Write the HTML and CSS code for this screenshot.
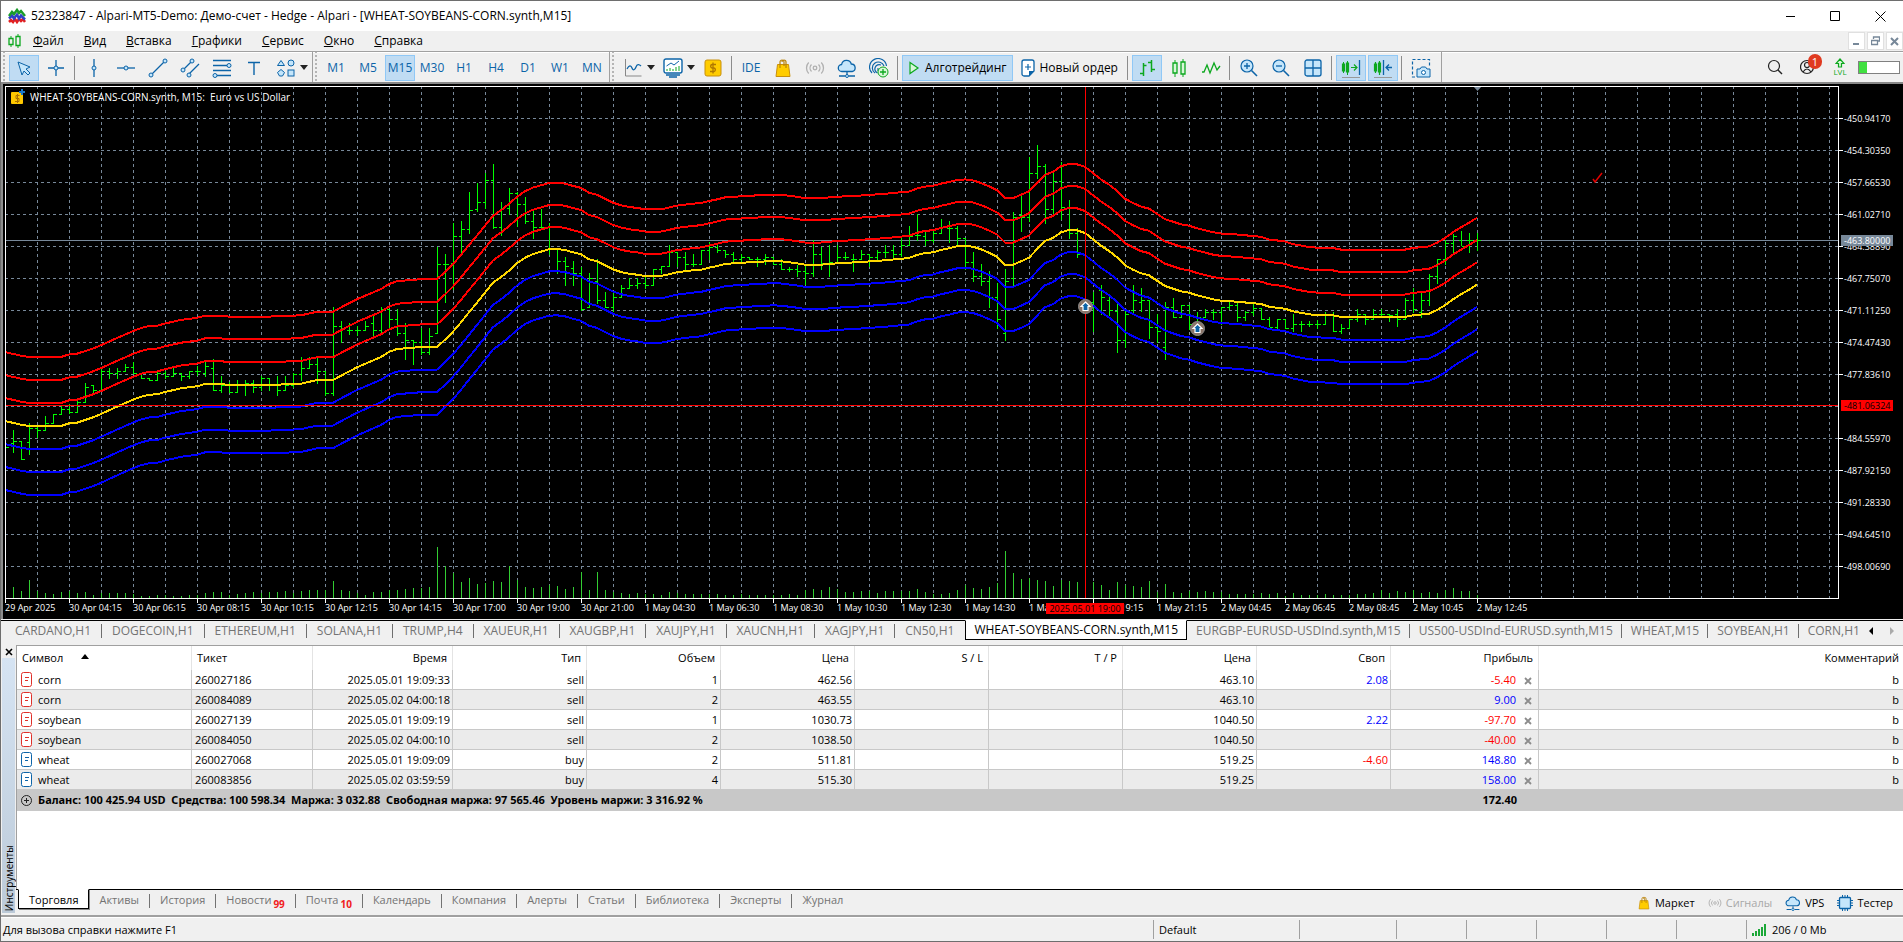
FILE: index.html
```html
<!DOCTYPE html>
<html lang="ru">
<head>
<meta charset="utf-8">
<title>52323847 - Alpari-MT5-Demo</title>
<link rel="stylesheet" href="styles.css">
</head>
<body>
<svg class="defs" aria-hidden="true">
  <symbol id="i-cloud" viewBox="0 0 20 20"><path d="M5 13.5a3.5 3.5 0 0 1-.4-7A5 5 0 0 1 14.3 6a3.8 3.8 0 0 1 .9 7.500z" fill="#c5e6fb" stroke="#0c64a8" stroke-width="1.300"/><path d="M10 14v3M2 18h6M12 18h6" stroke="#0c64a8" stroke-width="1.300"/><circle cx="10" cy="18" r="1.500" fill="#c5e6fb" stroke="#0c64a8"/></symbol>
  <symbol id="i-bag" viewBox="0 0 20 20"><path d="M4.500 6.500h11l1.500 12h-14z" fill="#ffcc00" stroke="#c8900c"/><path d="M7 10V4a2 2 0 0 1 4 0v4M9 4a2 2 0 0 1 4 0v6" fill="none" stroke="#b98208" stroke-width="1.200"/></symbol>
  <symbol id="i-signal" viewBox="0 0 20 20"><g fill="none" stroke="#b0b0b0" stroke-width="1.300"><circle cx="10" cy="10" r="1.800"/><path d="M6.500 6.500a5 5 0 0 0 0 7M13.500 6.500a5 5 0 0 1 0 7M3.700 4.500a8 8 0 0 0 0 11M16.300 4.500a8 8 0 0 1 0 11"/></g></symbol>
  <symbol id="i-sell" viewBox="0 0 11 15"><rect x=".5" y=".5" width="10" height="14" rx="2" fill="#fff" stroke="#e0302a"/><path d="M4 5.500h4M4 8.500h3" stroke="#e0302a"/></symbol>
  <symbol id="i-buy" viewBox="0 0 11 15"><rect x=".5" y=".5" width="10" height="14" rx="2" fill="#fff" stroke="#0c64a8"/><path d="M4 5.500h4M4 8.500h3" stroke="#0c64a8"/></symbol>
  <symbol id="i-x" viewBox="0 0 8 8"><path d="M1 1l6 6M7 1L1 7" stroke="#8c8c8c" stroke-width="1.800"/></symbol>
</svg>

<header class="titlebar">
  <svg class="app-icon" width="18" height="16" viewBox="0 0 18 16"><g fill="none" stroke-width="2.500"><path d="M1 14l2-2 2 2 2-3 2 3 2-3 2 2 2-2 2 3" stroke="#e32020"/><path d="M1 10.500l3-3 2 3 3-4 2 4 2-3 4 4" stroke="#3040c8"/><path d="M1 8l3-4 2 2 3-4 2 3 2-2 4 5" stroke="#1a9c2a"/></g></svg>
  <h1 class="title">52323847 - Alpari-MT5-Demo: Демо-счет - Hedge - Alpari - [WHEAT-SOYBEANS-CORN.synth,M15]</h1>
  <div class="win-controls">
    <button aria-label="Свернуть"><svg width="11" height="11"><path d="M1 5.500h9" stroke="#000"/></svg></button>
    <button aria-label="Развернуть"><svg width="11" height="11"><path d="M.5 .5h9v9h-9z" fill="none" stroke="#000"/></svg></button>
    <button aria-label="Закрыть"><svg width="11" height="11"><path d="M.5 .5l10 10M10.500 .5l-10 10" stroke="#000"/></svg></button>
  </div>
</header>

<nav class="menubar">
  <svg width="13" height="15" viewBox="0 0 13 15"><path d="M3 2v11M10 0v14" stroke="#0ca81e" stroke-width="1"/><path d="M1 4.500h4v6H1zM8 2.500h4v9H8z" fill="#f0f0f0" stroke="#0ca81e" stroke-width="1.300"/></svg>
  <a href="#"><u>Ф</u>айл</a><a href="#"><u>В</u>ид</a><a href="#"><u>В</u>ставка</a><a href="#"><u>Г</u>рафики</a><a href="#"><u>С</u>ервис</a><a href="#"><u>О</u>кно</a><a href="#"><u>С</u>правка</a>
  <div class="mdi">
    <button aria-label="Свернуть график"><svg width="9" height="10"><path d="M1 8h6" stroke="#778899" stroke-width="2"/></svg></button>
    <button aria-label="Восстановить график"><svg width="9" height="10"><path d="M2.500 3V1h6v4h-2M.5 4.500h6v4h-6z" fill="none" stroke="#778899" stroke-width="1.300"/></svg></button>
    <button aria-label="Закрыть график"><svg width="9" height="10"><path d="M1 2l7 7M8 2L1 9" stroke="#778899" stroke-width="2"/></svg></button>
  </div>
</nav>

<div class="toolbar">
  <section class="group draw">
    <button class="tool on" aria-label="Курсор"><svg width="20" height="20" viewBox="0 0 20 20"><path d="M4 4l12 5-4 2 4 4-2 2-4-4-2 4z" fill="#c5e6fb" stroke="#0c64a8"/></svg></button>
    <button class="tool" aria-label="Перекрестие"><svg width="20" height="20" viewBox="0 0 20 20"><path d="M10 2v16M2 10h16" stroke="#0c64a8" stroke-width="1.300"/><circle cx="10" cy="10" r="2" fill="#c5e6fb" stroke="#0c64a8"/></svg></button>
    <i class="sep"></i>
    <button class="tool" aria-label="Вертикальная линия"><svg width="20" height="20" viewBox="0 0 20 20"><path d="M10 1v18" stroke="#0c64a8" stroke-width="1.300"/><circle cx="10" cy="10" r="2" fill="#c5e6fb" stroke="#0c64a8"/></svg></button>
    <button class="tool" aria-label="Горизонтальная линия"><svg width="20" height="20" viewBox="0 0 20 20"><path d="M1 10h18" stroke="#0c64a8" stroke-width="1.300"/><circle cx="10" cy="10" r="2" fill="#c5e6fb" stroke="#0c64a8"/></svg></button>
    <button class="tool" aria-label="Трендовая линия"><svg width="20" height="20" viewBox="0 0 20 20"><path d="M3 17L17 3" stroke="#0c64a8" stroke-width="1.300"/><circle cx="3" cy="17" r="2" fill="#c5e6fb" stroke="#0c64a8"/><circle cx="17" cy="3" r="2" fill="#c5e6fb" stroke="#0c64a8"/></svg></button>
    <button class="tool" aria-label="Канал"><svg width="20" height="20" viewBox="0 0 20 20"><path d="M3 12L12 3M8 17L19 6" stroke="#0c64a8" stroke-width="1.300"/><g fill="#c5e6fb" stroke="#0c64a8"><circle cx="3" cy="12" r="2"/><circle cx="12" cy="3" r="2"/><circle cx="9" cy="17" r="2"/></g></svg></button>
    <button class="tool" aria-label="Фибоначчи"><svg width="20" height="20" viewBox="0 0 20 20"><path d="M1 2.500h18M1 7.500h18M1 12.500h18M1 17.500h18" stroke="#0c64a8" stroke-width="1.300"/><g fill="#c5e6fb" stroke="#0c64a8"><circle cx="17" cy="7.500" r="2"/><circle cx="3" cy="17.500" r="2"/></g></svg></button>
    <button class="tool" aria-label="Текст"><svg width="20" height="20" viewBox="0 0 20 20"><path d="M4 4.500h12M10 4v13" stroke="#0c64a8" stroke-width="1.400"/></svg></button>
    <button class="tool" aria-label="Фигуры"><svg width="20" height="20" viewBox="0 0 20 20"><g fill="#c5e6fb" stroke="#0c64a8"><path d="M5 2.500l3.500 5h-7z"/><circle cx="15" cy="5" r="3"/><path d="M5 11.500l3.500 3-2 3.500h-3l-2-3.500z"/><rect x="12" y="12" width="6" height="6"/></g></svg></button>
    <i class="caret"></i>
  </section>
  <section class="group frames">
    <button class="tool">M1</button><button class="tool">M5</button><button class="tool on">M15</button><button class="tool">M30</button><button class="tool">H1</button><button class="tool">H4</button><button class="tool">D1</button><button class="tool">W1</button><button class="tool">MN</button>
  </section>
  <section class="group">
    <button class="tool" aria-label="Тип графика"><svg width="20" height="20" viewBox="0 0 20 20"><path d="M2.500 1v17h16" fill="none" stroke="#888"/><path d="M4 11c2-4 4-4 5-1s3 2 4-1 3-3 5-1" fill="none" stroke="#0c64a8" stroke-width="1.300"/></svg></button><i class="caret"></i>
    <button class="tool" aria-label="Индикаторы"><svg width="20" height="20" viewBox="0 0 20 20"><rect x="1" y="1" width="18" height="14" rx="2" fill="#fff" stroke="#0c64a8" stroke-width="1.400"/><path d="M3.500 8L8 5l3 2 5-4" fill="none" stroke="#0c64a8"/><path d="M4 13v-2M7 13v-3M10 13v-2M13 13V9M16 13V8" stroke="#0ca81e"/><path d="M3 17h14M6 19h8" stroke="#0c64a8" stroke-width="1.300"/></svg></button><i class="caret"></i>
    <button class="tool" aria-label="Символ"><svg width="20" height="20" viewBox="0 0 20 20"><rect x="2" y="2" width="16" height="16" rx="2" fill="#ffcc00" stroke="#c8900c"/><path d="M13 6.500H9a1.800 1.800 0 0 0 0 3.500h2a1.800 1.800 0 0 1 0 3.500H7M10 4.500v11" fill="none" stroke="#b07800" stroke-width="1.300"/></svg></button>
    <i class="sep"></i>
    <button class="tool">IDE</button>
    <button class="tool" aria-label="Маркет"><svg width="20" height="20"><use href="#i-bag"/></svg></button>
    <button class="tool" aria-label="Сигналы"><svg width="20" height="20"><use href="#i-signal"/></svg></button>
    <button class="tool" aria-label="VPS"><svg width="20" height="20"><use href="#i-cloud"/></svg></button>
    <button class="tool" aria-label="Торговые счета"><svg width="20" height="20" viewBox="0 0 20 20"><g fill="none" stroke="#0c64a8" stroke-width="1.200"><path d="M3 15A8.500 8.500 0 1 1 17.500 8M6 15A6 6 0 1 1 15 8M8.500 15A3.500 3.500 0 1 1 12 7M9 10v3"/></g><circle cx="14" cy="14" r="5" fill="#d9f7d9" stroke="#0ca81e"/><path d="M14 11v6M11 14h6" stroke="#0ca81e" stroke-width="1.300"/></svg></button>
    <i class="sep"></i>
    <button class="tool wide on"><svg width="12" height="14" viewBox="0 0 12 14"><path d="M2 1.500l8 5.500-8 5.500z" fill="#d9f7d9" stroke="#0ca81e" stroke-width="1.200"/></svg>Алготрейдинг</button>
    <button class="tool wide"><svg width="14" height="18" viewBox="0 0 14 18"><path d="M1 3a2 2 0 0 1 2-2h8a2 2 0 0 1 2 2v9l-5 5H3a2 2 0 0 1-2-2z" fill="#fff" stroke="#0c64a8" stroke-width="1.300"/><path d="M13 12l-5 5v-5z" fill="#0c64a8"/><path d="M7 5v6M4 8h6" stroke="#0c64a8" stroke-width="1.200"/></svg>Новый ордер</button>
    <i class="sep"></i>
    <button class="tool on" aria-label="Бары"><svg width="20" height="20" viewBox="0 0 20 20"><path d="M6.500 5v13M6.500 7.500h3M3 15.500h3.500M14.500 2v12M11 4.500h3.500M14.500 11.500H18" stroke="#0ca81e" stroke-width="1.500"/></svg></button>
    <button class="tool" aria-label="Свечи"><svg width="20" height="20" viewBox="0 0 20 20"><path d="M6 2v17M14 1v18" stroke="#0ca81e"/><path d="M4 5h4v10H4zM12 4h4v12h-4z" fill="#d9f7d9" stroke="#0ca81e" stroke-width="1.300"/></svg></button>
    <button class="tool" aria-label="Линия"><svg width="20" height="20" viewBox="0 0 20 20"><path d="M1 14h2l3-7 3 8 4-10 3 7 3-4" fill="none" stroke="#0ca81e" stroke-width="1.300"/></svg></button>
    <i class="sep"></i>
    <button class="tool" aria-label="Увеличить"><svg width="20" height="20" viewBox="0 0 20 20"><path d="M12.500 12.500L18 18" stroke="#0c64a8" stroke-width="1.600"/><circle cx="8" cy="8" r="6" fill="#c5e6fb" stroke="#0c64a8" stroke-width="1.200"/><path d="M5 8h6M8 5v6" stroke="#0c64a8" stroke-width="1.300"/></svg></button>
    <button class="tool" aria-label="Уменьшить"><svg width="20" height="20" viewBox="0 0 20 20"><path d="M12.500 12.500L18 18" stroke="#0c64a8" stroke-width="1.600"/><circle cx="8" cy="8" r="6" fill="#c5e6fb" stroke="#0c64a8" stroke-width="1.200"/><path d="M5 8h6" stroke="#0c64a8" stroke-width="1.300"/></svg></button>
    <button class="tool" aria-label="Плитка"><svg width="20" height="20" viewBox="0 0 20 20"><rect x="2" y="2" width="16" height="16" rx="2" fill="#c5e6fb" stroke="#0c64a8" stroke-width="1.300"/><path d="M10 2v16M2 10h16" stroke="#0c64a8" stroke-width="1.300"/></svg></button>
    <i class="sep"></i>
    <button class="tool on" aria-label="Автопрокрутка"><svg width="20" height="20" viewBox="0 0 20 20"><path d="M2.500 4v11M6.500 3v14" stroke="#0ca81e"/><path d="M1.500 6h2v7h-2zM5.500 5h2v9h-2zM10 9.500h6M13 6.500l3 3-3 3" fill="none" stroke="#0ca81e" stroke-width="1.200"/><path d="M18.500 2v15" stroke="#0c64a8" stroke-width="1.300"/><path d="M1 19.500h18" stroke="#999"/></svg></button>
    <button class="tool on" aria-label="Сдвиг графика"><svg width="20" height="20" viewBox="0 0 20 20"><path d="M1.500 6h2v7h-2zM5.500 5h2v9h-2zM2.500 4v11M6.500 3v14" fill="none" stroke="#0ca81e" stroke-width="1.200"/><path d="M10.500 2v15M13 9.500h6M16 6.500l-3 3 3 3" fill="none" stroke="#0c64a8" stroke-width="1.300"/><path d="M1 19.500h18" stroke="#999"/></svg></button>
    <i class="sep"></i>
    <button class="tool" aria-label="Снимок"><svg width="20" height="20" viewBox="0 0 20 20"><path d="M4 19H1.500V1.500h17V8" fill="none" stroke="#0c64a8" stroke-width="1.200" stroke-dasharray="3 2"/><path d="M6 11h3l1.500-2h4L16 11h3v8H6z" fill="#c5e6fb" stroke="#0c64a8"/><circle cx="12.500" cy="14.500" r="2" fill="#fff" stroke="#0c64a8"/></svg></button>
  </section>
  <div class="tray">
    <button class="tool" aria-label="Поиск"><svg width="18" height="18" viewBox="0 0 18 18"><circle cx="8" cy="8" r="5.500" fill="none" stroke="#222" stroke-width="1.200"/><path d="M12 12l4 4" stroke="#222" stroke-width="1.500"/></svg></button>
    <button class="tool user" aria-label="Профиль"><svg width="18" height="18" viewBox="0 0 18 18"><g fill="none" stroke="#222" stroke-width="1.200"><circle cx="7" cy="9" r="6.500"/><circle cx="7" cy="7" r="2.500"/><path d="M3 14q4-6 8 0"/></g></svg><b class="badge">1</b></button>
    <span class="lvl"><svg width="10" height="10" viewBox="0 0 10 10"><path d="M3.500 9V5.500H1L5 1l4 4.500H6.500V9z" fill="#d9f7d9" stroke="#0ca81e" stroke-width="1.200"/></svg>LVL</span>
    <span class="battery"><i></i></span>
  </div>
</div>

<main class="chart">
  <div class="plot-col">
    <div class="plot">
      <svg id="plot" width="100%" height="513" role="img" aria-label="График WHEAT-SOYBEANS-CORN.synth, M15"></svg>
      <p class="caption"><svg width="14" height="16" viewBox="0 0 14 16"><rect x="0" y="3" width="12" height="12" rx="1" fill="#ffc800"/><path d="M8.500 6.500H5v3h3v3H4M6.500 5v9" fill="none" stroke="#a87000"/><path d="M11 0v6M8 3h6" stroke="#1c78c8" stroke-width="2"/></svg>WHEAT-SOYBEANS-CORN.synth, M15:&nbsp; Euro vs US Dollar</p>
    </div>
    <div class="times">
      <span>29 Apr 2025</span><span>30 Apr 04:15</span><span>30 Apr 06:15</span><span>30 Apr 08:15</span><span>30 Apr 10:15</span><span>30 Apr 12:15</span><span>30 Apr 14:15</span><span>30 Apr 17:00</span><span>30 Apr 19:00</span><span>30 Apr 21:00</span><span>1 May 04:30</span><span>1 May 06:30</span><span>1 May 08:30</span><span>1 May 10:30</span><span>1 May 12:30</span><span>1 May 14:30</span><span>1 May 16:30</span><span>1 May 19:15</span><span>1 May 21:15</span><span>2 May 04:45</span><span>2 May 06:45</span><span>2 May 08:45</span><span>2 May 10:45</span><span>2 May 12:45</span>
      <b class="cursor-time">2025.05.01 19:00</b>
    </div>
  </div>
  <div class="prices">
    <span>-450.94170</span><span>-454.30350</span><span>-457.66530</span><span>-461.02710</span><span>-464.38890</span><span>-467.75070</span><span>-471.11250</span><span>-474.47430</span><span>-477.83610</span><span class="blank"></span><span>-484.55970</span><span>-487.92150</span><span>-491.28330</span><span>-494.64510</span><span>-498.00690</span>
    <b class="tag bid">-463.80000</b><b class="tag level">-481.06324</b>
  </div>
</main>

<nav class="chart-tabs">
  <a href="#">CARDANO,H1</a><a href="#">DOGECOIN,H1</a><a href="#">ETHEREUM,H1</a><a href="#">SOLANA,H1</a><a href="#">TRUMP,H4</a><a href="#">XAUEUR,H1</a><a href="#">XAUGBP,H1</a><a href="#">XAUJPY,H1</a><a href="#">XAUCNH,H1</a><a href="#">XAGJPY,H1</a><a href="#" class="before">CN50,H1</a><a href="#" class="active">WHEAT-SOYBEANS-CORN.synth,M15</a><a href="#">EURGBP-EURUSD-USDInd.synth,M15</a><a href="#">US500-USDInd-EURUSD.synth,M15</a><a href="#">WHEAT,M15</a><a href="#">SOYBEAN,H1</a><a href="#" class="before">CORN,H1</a>
  <div class="scrollers"><button aria-label="Назад"><svg width="5" height="8"><path d="M4 0v8L0 4z"/></svg></button><button aria-label="Вперёд"><svg width="5" height="8"><path d="M1 0v8l4-4z" fill="#aaa"/></svg></button></div>
</nav>

<section class="toolbox">
  <aside class="strip"><button class="close" aria-label="Закрыть панель"><svg width="8" height="8" viewBox="0 0 8 8"><path d="M1 1l6 6M7 1L1 7" stroke="#000" stroke-width="1.600"/></svg></button><span class="strip-title">Инструменты</span></aside>
  <div class="panel">
    <div class="table-area">
    <table class="trades">
      <colgroup><col class="c-sym"><col class="c-tick"><col class="c-time"><col class="c-n"><col class="c-n"><col class="c-n"><col class="c-n"><col class="c-n"><col class="c-n"><col class="c-n"><col class="c-profit"><col></colgroup>
      <thead><tr><th class="l">Символ<svg class="sort" width="8" height="5"><path d="M0 5l4-5 4 5z"/></svg></th><th class="l">Тикет</th><th>Время</th><th>Тип</th><th>Объем</th><th>Цена</th><th>S / L</th><th>T / P</th><th>Цена</th><th>Своп</th><th>Прибыль</th><th>Комментарий</th></tr></thead>
      <tbody>
        <tr><td class="sym"><svg width="11" height="15"><use href="#i-sell"/></svg>corn</td><td class="l">260027186</td><td>2025.05.01 19:09:33</td><td>sell</td><td>1</td><td>462.56</td><td></td><td></td><td>463.10</td><td class="pos">2.08</td><td class="neg">-5.40<button class="x" aria-label="Закрыть позицию"><svg width="8" height="8"><use href="#i-x"/></svg></button></td><td>b</td></tr>
        <tr><td class="sym"><svg width="11" height="15"><use href="#i-sell"/></svg>corn</td><td class="l">260084089</td><td>2025.05.02 04:00:18</td><td>sell</td><td>2</td><td>463.55</td><td></td><td></td><td>463.10</td><td></td><td class="pos">9.00<button class="x" aria-label="Закрыть позицию"><svg width="8" height="8"><use href="#i-x"/></svg></button></td><td>b</td></tr>
        <tr><td class="sym"><svg width="11" height="15"><use href="#i-sell"/></svg>soybean</td><td class="l">260027139</td><td>2025.05.01 19:09:19</td><td>sell</td><td>1</td><td>1030.73</td><td></td><td></td><td>1040.50</td><td class="pos">2.22</td><td class="neg">-97.70<button class="x" aria-label="Закрыть позицию"><svg width="8" height="8"><use href="#i-x"/></svg></button></td><td>b</td></tr>
        <tr><td class="sym"><svg width="11" height="15"><use href="#i-sell"/></svg>soybean</td><td class="l">260084050</td><td>2025.05.02 04:00:10</td><td>sell</td><td>2</td><td>1038.50</td><td></td><td></td><td>1040.50</td><td></td><td class="neg">-40.00<button class="x" aria-label="Закрыть позицию"><svg width="8" height="8"><use href="#i-x"/></svg></button></td><td>b</td></tr>
        <tr><td class="sym"><svg width="11" height="15"><use href="#i-buy"/></svg>wheat</td><td class="l">260027068</td><td>2025.05.01 19:09:09</td><td>buy</td><td>2</td><td>511.81</td><td></td><td></td><td>519.25</td><td class="neg">-4.60</td><td class="pos">148.80<button class="x" aria-label="Закрыть позицию"><svg width="8" height="8"><use href="#i-x"/></svg></button></td><td>b</td></tr>
        <tr><td class="sym"><svg width="11" height="15"><use href="#i-buy"/></svg>wheat</td><td class="l">260083856</td><td>2025.05.02 03:59:59</td><td>buy</td><td>4</td><td>515.30</td><td></td><td></td><td>519.25</td><td></td><td class="pos">158.00<button class="x" aria-label="Закрыть позицию"><svg width="8" height="8"><use href="#i-x"/></svg></button></td><td>b</td></tr>
      </tbody>
      <tfoot><tr><td class="sym" colspan="10"><svg width="11" height="11" viewBox="0 0 11 11"><circle cx="5.500" cy="5.500" r="5" fill="none" stroke="#222"/><path d="M3 5.500h5M5.500 3v5" stroke="#222"/></svg>Баланс: 100 425.94 USD&nbsp; Средства: 100 598.34&nbsp; Маржа: 3 032.88&nbsp; Свободная маржа: 97 565.46&nbsp; Уровень маржи: 3 316.92 %</td><td class="total">172.40</td><td></td></tr></tfoot>
    </table>
    </div>
    <nav class="panel-tabs">
      <a href="#" class="active">Торговля</a><a href="#">Активы</a><a href="#">История</a><a href="#">Новости<sub>99</sub></a><a href="#">Почта<sub>10</sub></a><a href="#">Календарь</a><a href="#">Компания</a><a href="#">Алерты</a><a href="#">Статьи</a><a href="#">Библиотека</a><a href="#">Эксперты</a><a href="#">Журнал</a>
      <div class="services">
        <button><svg width="14" height="14"><use href="#i-bag"/></svg>Маркет</button><button class="off"><svg width="14" height="14"><use href="#i-signal"/></svg>Сигналы</button><button><svg width="16" height="16"><use href="#i-cloud"/></svg>VPS</button><button><svg width="16" height="16" viewBox="0 0 16 16"><path d="M5.500 0v16M8 0v16M10.500 0v16M0 5.500h16M0 8h16M0 10.500h16" stroke="#0c64a8"/><rect x="2.500" y="2.500" width="11" height="11" rx="1" fill="#c5e6fb" stroke="#0c64a8" stroke-width="1.300"/></svg>Тестер</button>
      </div>
    </nav>
  </div>
</section>

<footer class="status">
  <span class="hint">Для вызова справки нажмите F1</span><span class="s1">Default</span><span class="s2"></span><span class="s3"></span><span class="s3"></span><span class="s3"></span><span class="s3"></span><span class="s3"></span><span class="net"><svg width="14" height="12" viewBox="0 0 14 12"><path d="M1 12V9M4 12V7M7 12V5M10 12V3M13 12V0" stroke="#1ca838" stroke-width="2"/></svg>206 / 0 Mb</span>
</footer>
<script src="chart.js"></script>
</body>
</html>
```
FILE: styles.css
```css
* { box-sizing: border-box; }
body {
  margin: 0;
  min-height: 100vh;
  display: flex;
  flex-direction: column;
  background: #f0f0f0;
  border: 1px solid #6e6e6e;
  border-right: 0;
  font: 11px/16px "Open Sans", "Noto Sans", sans-serif;
  color: #000;
  overflow-x: hidden;
}
a { color: inherit; text-decoration: none; }
button { font: inherit; color: inherit; border: 0; padding: 0; background: none; }
svg { flex: none; display: block; }
.defs { position: absolute; width: 0; height: 0; }

.titlebar { display: flex; align-items: center; height: 30px; padding-left: 7px; background: #fff; }
.title { margin: 0 auto 0 5px; font-size: 12px; font-weight: 400; white-space: nowrap; }
.win-controls { display: flex; }
.win-controls button { width: 45px; height: 28px; display: grid; place-items: center; }

.menubar { display: flex; align-items: center; height: 20px; padding-left: 7px; font-size: 12px; gap: 20px; }
.menubar > svg { margin-right: -8px; }
.mdi { display: flex; gap: 2px; margin-left: auto; }
.mdi button { width: 17px; height: 18px; background: #fff; border: 1px solid #e0e0e0; display: grid; place-items: center; }

.toolbar { display: flex; height: 33px; border-top: 1px solid #a0a0a0; border-bottom: 2px solid #888; box-shadow: inset 0 1px #fff; }
.group { display: flex; align-items: center; gap: 2px; padding: 1px 5px 0 8px; border-right: 1px solid #a0a0a0; background: radial-gradient(circle, #b4b4b4 1px, transparent 1px) 1px 2px / 4px 4px repeat-y; }
.group.draw { padding-right: 3px; }
.group.frames { padding-right: 2px; }
.tool { width: 30px; height: 26px; display: flex; align-items: center; justify-content: center; gap: 6px; border: 1px solid transparent; color: #0c64a8; font-size: 12px; white-space: nowrap; }
.tool.on { background: #c0dcf3; border-color: #90c8f6; }
.tool.wide { width: auto; padding: 0 5px; color: #000; gap: 5px; }
.sep { width: 1px; height: 24px; margin: 0 2px 0 1px; background: #8c8c8c; }
.caret { border: 4px solid transparent; border-top: 5px solid #222; border-bottom: 0; margin: 0 1px 0 -3px; }
.tray { margin-left: auto; display: flex; align-items: center; gap: 4px; padding-right: 3px; }
.user { position: relative; }
.badge { position: absolute; top: -1px; right: 1px; width: 14px; height: 15px; border-radius: 7px; background: #e03a20; color: #fff; font: 11px/15px "Open Sans", sans-serif; text-align: center; }
.lvl { display: flex; flex-direction: column; align-items: center; width: 24px; color: #0ca81e; font-size: 8px; line-height: 8px; }
.battery { width: 42px; height: 13px; border: 1px solid #808080; background: #fff; margin-left: 2px; }
.battery i { display: block; width: 8px; height: 100%; background: #40e040; }

.chart { display: flex; background: #000; border-left: 2px solid #8c8c8c; color: #fff; padding: 2px 0 0 2px; font-size: 9px; line-height: 11px; }
.plot-col { flex: 1; min-width: 0; }
.plot { position: relative; }
.caption { position: absolute; left: 6px; top: 3px; margin: 0; display: flex; align-items: center; gap: 5px; font-size: 10px; }
.times { position: relative; display: flex; height: 20px; overflow: hidden; }
.times span { flex: 0 0 64px; padding-top: 3px; white-space: nowrap; background: linear-gradient(#fff, #fff) 0 0 / 1px 4px no-repeat; }
.cursor-time { position: absolute; left: 1041px; top: 4px; width: 78px; background: #f00; color: #000; font-weight: 400; text-align: center; white-space: nowrap; }
.prices { position: relative; flex: 0 0 64px; padding-top: 16px; }
.prices span { display: flex; align-items: center; height: 32px; padding-left: 5px; background: linear-gradient(#fff, #fff) 0 16px / 4px 1px no-repeat; }
.prices .blank { background: none; }
.tag { position: absolute; left: 2px; width: 52px; padding-left: 3px; font-weight: 400; }
.bid { top: 149px; background: #778899; }
.level { top: 314px; background: #f00; color: #000; }

.chart-tabs { display: flex; height: 25px; border-top: 1px solid #000; padding: 0 0 5px 4px; margin-top: 1px; color: #737373; font-size: 12px; line-height: 16px; }
.chart-tabs a { position: relative; padding: 2px 11px 0 10px; white-space: nowrap; }
.chart-tabs a:not(.active):not(.before)::after { content: ""; position: absolute; right: 0; top: 3px; height: 14px; border-right: 1px solid #6e6e6e; }
.chart-tabs .active { margin-top: -1px; padding: 1px 8px 0; border: 1px solid #000; border-top-color: #fff; background: #fff; color: #000; }
.chart-tabs .active ~ a { padding: 2px 9px 0; }
.scrollers { margin-left: auto; display: flex; gap: 15px; padding-right: 9px; align-items: center; }

.toolbox { flex: 1; display: flex; border-bottom: 2px solid #a0a0a0; padding-bottom: 2px; }
.strip { width: 15px; display: flex; flex-direction: column; align-items: center; justify-content: space-between; background: linear-gradient(to right, #f0f0f0 1px, transparent 1px, transparent 14px, #f0f0f0 14px), linear-gradient(#f0f0f0 13px, #d6e4f3 13px, #bccad8); }
.close { height: 13px; }
.strip-title { writing-mode: vertical-rl; transform: rotate(180deg); line-height: 14px; font-size: 10px; padding-top: 2px; }
.panel { flex: 1; min-width: 0; display: flex; flex-direction: column; }
.table-area { flex: 1; background: #fff; border: 1px solid #a0a0a0; border-right: 0; border-bottom: 0; }
.trades { width: 100%; table-layout: fixed; border-collapse: separate; border-spacing: 0; }
.c-sym { width: 175px; }
.c-tick { width: 121px; }
.c-time { width: 140px; }
.c-n { width: 134px; }
.c-profit { width: 148px; }
.trades th { height: 24px; padding: 0 5px; font-weight: 400; text-align: right; border-right: 1px solid #e4e4e4; }
.trades td { height: 20px; padding: 0 2px 0 4px; text-align: right; border-right: 1px solid #c8c8c8; border-bottom: 1px solid #c8c8c8; line-height: 16px; white-space: nowrap; }
.trades tr > :last-child { border-right: 0; padding-right: 4px; }
.trades .l { text-align: left; }
.trades td.l { padding-left: 3px; }
.sort { display: inline-block; margin-left: 18px; vertical-align: 3px; }
.trades .sym { text-align: left; }
.sym svg { display: inline-block; vertical-align: middle; margin-right: 6px; margin-top: -2px; }
.trades tbody tr:nth-child(even) { background: #ebebeb; }
.trades .pos { color: #00f; }
.trades .neg { color: #f00; }
.x { margin: 0 4px 0 8px; vertical-align: middle; }
.trades tfoot td { background: #c8c8c8; font-family: "Noto Sans", sans-serif; font-weight: 700; border-color: #c8c8c8; height: 21px; }
.trades tfoot .total { padding-right: 21px; }

.panel-tabs { display: flex; height: 24px; border-top: 1px solid #000; padding-left: 2px; color: #737373; }
.panel-tabs a { position: relative; padding: 1px 11px 0 10px; line-height: 18px; }
.panel-tabs a:not(.active):not(:nth-child(12))::after { content: ""; position: absolute; right: 0; top: 4px; height: 14px; border-right: 1px solid #737373; }
.panel-tabs .active { margin-top: -1px; height: 20px; background: #fff; color: #000; border: 1px solid #000; border-top-color: #fff; padding: 1px 10px 0; box-shadow: 1px 1px #888; }
sub { color: #f02020; font-size: 10px; font-weight: 700; line-height: 8px; margin-left: 2px; vertical-align: -4px; }
.services { margin-left: auto; display: flex; gap: 13px; padding-right: 10px; color: #000; }
.services button { display: flex; align-items: center; gap: 4px; padding-top: 2px; }
.services .off { color: #a8a8a8; }

.status { display: flex; align-items: center; height: 24px; padding: 3px 0 2px 2px; box-shadow: inset 0 1px #fff; }
.status span { height: 19px; line-height: 19px; }
.status .hint { flex: 1; }
.status span + span { border-left: 1px solid #a0a0a0; padding-left: 5px; }
.s1 { width: 146px; }
.s2 { width: 97px; }
.s3 { width: 70px; }
.status .net { width: 157px; display: flex; align-items: center; gap: 6px; }
```
FILE: chart.js
```js
// Values are in thirds of a pixel below the datum line; y() maps them into the plot.
const STEP = 8;
const y = v => v / 3 + 44;

// high, low, open, close for each 15-minute bar
const bars = `945 955 950 952|900 968 938 932|932 990 932 988|880 975 937 895|890 924 895 901|858 903 901 880|853 882 880 853|828 853 853 838|823 853 838 845|813 846 845 816|759 818 816 772|766 788 766 781|717 782 781 724|714 748 724 730|714 747 730 724|702 726 724 710|697 732 710 730|730 746 730 745|745 752 745 751|727 752 751 730|724 747 730 739|715 741 738 730|729 753 730 739|724 747 739 724|708 739 724 724|697 742 730 709|687 783 715 781|738 790 781 766|757 790 766 787|750 788 787 763|750 797 763 760|750 788 760 772|738 783 772 745|743 783 745 766|738 797 765 781|738 783 781 765|730 775 765 731|681 753 731 715|681 715 715 703|681 762 703 724|724 797 724 788|531 797 788 589|573 640 589 598|580 616 600 601|588 617 601 601|573 602 601 589|553 617 580 601|531 608 601 538|537 600 538 566|537 617 566 610|580 690 610 631|630 705 631 637|594 675 637 667|594 675 667 617|350 612 610 403|372 519 403 403|279 480 400 317|273 370 317 296|186 312 296 239|159 245 238 217|128 237 217 151|102 297 151 290|216 318 290 233|174 255 233 188|186 291 188 223|201 282 223 274|243 327 274 290|237 291 290 290|279 375 290 358|358 432 358 394|381 468 394 409|393 468 415 430|412 543 430 538|430 533 532 445|387 523 454 511|486 534 511 532|489 546 532 502|465 504 502 475|445 475 475 466|445 477 466 460|436 477 460 466|417 467 466 418|408 432 418 409|345 410 409 367|365 410 367 382|366 421 382 403|372 411 403 403|360 404 403 361|336 390 361 352|338 369 352 361|360 384 361 373|366 402 373 388|373 403 388 382|381 390 382 388|381 411 388 388|372 405 388 382|381 405 382 403|387 420 403 418|412 427 418 418|406 441 418 424|403 465 424 430|330 441 430 373|350 420 373 400|345 441 400 397|345 400 397 382|366 390 382 382|372 426 388 388|360 390 388 373|372 411 373 382|360 397 382 367|345 385 367 367|345 385 360 373|321 381 373 346|288 348 346 318|251 334 315 316|307 349 318 331|300 340 331 310|266 312 310 290|273 340 295 295|288 350 295 325|323 420 325 397|366 456 397 439|402 468 439 454|423 534 454 502|459 597 502 568|417 633 610 454|246 471 445 260|195 306 255 262|81 276 260 130|45 147 130 109|102 282 109 238|130 259 238 154|96 270 154 232|210 327 232 310|294 384 310 373|500 520 510 517|486 606 517 530|465 556 480 502|501 559 511 540|519 669 544 631|543 654 631 553|465 549 540 511|474 546 517 511|511 627 511 590|553 640 590 604|516 690 652 532|504 564 532 562|525 564 562 526|526 600 526 583|546 590 583 562|537 564 562 547|537 571 547 547|532 585 547 532|516 540 532 526|516 577 526 562|542 572 562 547|522 557 547 533|533 569 533 568|561 591 568 590|567 597 590 568|567 597 568 595|552 606 595 583|573 606 583 583|573 591 583 583|571 597 583 583|546 585 583 556|547 605 556 604|582 612 604 595|567 597 595 568|537 576 568 553|552 585 553 568|537 570 568 553|537 562 553 553|552 576 553 556|537 591 553 568|504 569 568 511|474 549 511 538|490 564 547 511|432 528 511 439|388 462 439 388|331 405 388 340|312 370 340 319|303 348 331 347|309 369 331 331|309 363 331 331`
  .split('|').map(r => r.split(' ').map(Number));

const volumes = [0,11,7,18,7,5,4,6,7,5,6,3,5,5,5,5,4,2,2,3,3,2,2,3,3,5,6,6,3,4,5,6,5,6,6,7,5,7,8,8,8,17,8,7,5,3,6,6,8,8,9,10,10,11,51,32,25,16,20,14,15,17,16,32,18,11,10,11,13,12,9,11,26,8,26,8,6,5,4,5,4,4,3,6,5,4,4,4,4,4,3,3,4,3,3,3,3,3,4,3,8,9,8,11,9,6,6,7,7,5,7,7,7,7,9,6,4,4,5,8,13,10,9,11,15,47,25,19,20,18,17,12,18,17,16,0,16,13,8,16,13,12,11,17,6,14,6,5,7,6,7,6,6,4,4,4,4,5,4,5,2,5,3,3,3,4,3,3,3,4,4,5,8,5,7,6,8,5,6,5,8,10,7,7,3];

// moving average: [bar index, value]
const mean = [[0,873],[2,884],[3,888],[7,888],[8,880],[9,878],[10,870],[11,862],[12,852],[14,830],[16,809],[17,800],[18,794],[19,793],[20,786],[22,775],[24,769],[25,762],[27,762],[28,765],[33,765],[37,761],[39,750],[41,750],[42,737],[44,712],[47,681],[48,666],[49,657],[51,653],[52,651],[54,651],[55,629],[56,605],[57,577],[58,547],[59,518],[60,488],[61,458],[62,441],[63,422],[64,400],[65,383],[66,372],[67,365],[68,358],[69,357],[70,360],[71,367],[72,373],[73,388],[74,394],[75,406],[76,418],[77,426],[78,431],[79,434],[80,438],[82,438],[83,433],[84,427],[86,421],[87,419],[88,413],[89,408],[90,402],[91,400],[93,397],[96,393],[97,394],[99,400],[100,404],[102,404],[104,400],[107,396],[110,391],[113,384],[114,375],[115,369],[116,367],[117,360],[118,355],[119,349],[120,347],[121,350],[122,358],[123,368],[124,380],[125,404],[126,404],[127,394],[128,383],[129,358],[130,333],[131,324],[132,307],[133,300],[134,301],[135,309],[136,328],[137,347],[138,363],[139,382],[140,406],[141,419],[142,430],[143,436],[144,452],[145,468],[146,476],[147,484],[148,488],[149,496],[150,502],[151,508],[152,512],[154,515],[157,522],[158,530],[160,536],[161,544],[163,553],[164,555],[166,556],[167,561],[175,561],[176,556],[178,551],[179,540],[180,526],[181,508],[182,493],[183,479],[184,464]];

const parts = [];
const line = (x1, y1, x2, y2, cls) =>
  parts.push(`<line x1="${x1}" y1="${y1}" x2="${x2}" y2="${y2}" class="${cls}"/>`);

for (let x = 32.5; x < 4000; x += 32) line(x, 0, x, 512, 'grid');
for (let gy = 32.5; gy < 500; gy += 32) line(0, gy, '100%', gy, 'grid');

volumes.forEach((v, i) => v && line(i * STEP + .5, 512 - v, i * STEP + .5, 512, 'vol'));
line(0, 154.5, '100%', 154.5, 'bid-line');

let d = '';
bars.forEach(([h, l, o, c], i) => {
  const x = i * STEP + .5, r = v => Math.round(y(v)) + .5;
  d += `M${x} ${Math.round(y(h))}V${Math.round(y(l))}`;
  if (i) d += `M${x - 3} ${r(o)}H${x}`;
  d += `M${x} ${r(c)}H${x + 3}`;
});
parts.push(`<path d="${d}" class="bar"/>`);

// envelopes are spaced at 0.5 % of price, 4260 px above the plot being price zero
for (let k = -3; k <= 3; k++) {
  const pts = mean.map(([i, v]) => {
    const m = y(v);
    return `${i * STEP},${(m + k * (m + 4260) * 0.005).toFixed(1)}`;
  }).join(' ');
  parts.push(`<polyline points="${pts}" class="env ${k < 0 ? 'up' : k > 0 ? 'down' : 'mid'}"/>`);
}

line(0, 319.5, '100%', 319.5, 'level-line');
line(1080.5, 0, 1080.5, 512, 'level-line');
for (const [mx, my] of [[1080.5, 220.5], [1192.5, 242.5]]) {
  parts.push(`<g transform="translate(${mx} ${my})"><circle r="7" fill="#8b7568" stroke="#8c8c8c"/><path d="M0-4.500L4.500 0H2.500V4H-2.500V0H-4.500z" fill="#0c64a8" stroke="#fff" stroke-width="1.200"/></g>`);
}
parts.push('<path d="M1468 0h9l-4.500 5z" fill="#778899"/>');
parts.push('<path d="M1588 93l2 3 7-9" fill="none" stroke="#e00000" stroke-width="1.500"/>');
parts.push('<line x1="0" x2="100%" y1="0" y2="0" class="frame"/><line x1="0" x2="0" y1="0" y2="100%" class="frame"/><line x1="100%" x2="100%" y1="0" y2="100%" class="frame"/><line x1="0" x2="100%" y1="100%" y2="100%" class="frame"/>');

const style = `<style>
.grid{stroke:#778899;stroke-dasharray:3 3;shape-rendering:crispEdges}
.vol{stroke:#32cd32;shape-rendering:crispEdges}
.bar{stroke:#0f0;fill:none;shape-rendering:crispEdges}
.bid-line{stroke:#778899}
.level-line{stroke:#f00}
.env{fill:none;stroke-width:2;shape-rendering:crispEdges}
.up{stroke:#f00}.mid{stroke:#ffd700}.down{stroke:#00f}
.frame{stroke:#fff;stroke-width:2}
</style>`;
document.getElementById('plot').innerHTML = style + parts.join('');
```
